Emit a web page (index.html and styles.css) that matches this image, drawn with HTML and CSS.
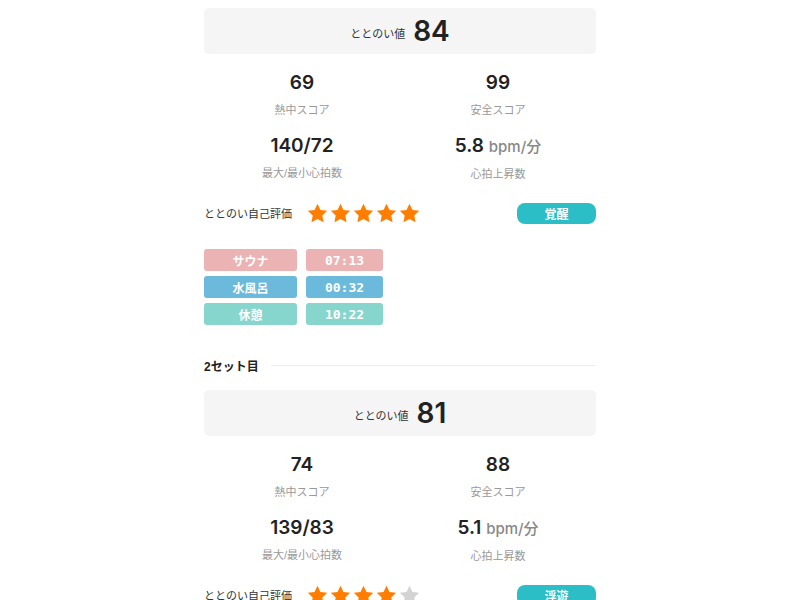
FILE: index.html
```html
<!DOCTYPE html>
<html lang="ja">
<head>
<meta charset="utf-8">
<link rel="stylesheet" href="styles.css">
</head>
<body>
<main class="page">
  <section class="set">
    <div class="score-box"><span class="score-label">ととのい値</span><span class="score-value">84</span></div>
    <div class="stats">
      <div class="stat"><div class="stat-num">69</div><div class="stat-label">熱中スコア</div></div>
      <div class="stat"><div class="stat-num">99</div><div class="stat-label">安全スコア</div></div>
      <div class="stat"><div class="stat-num">140/72</div><div class="stat-label">最大/最小心拍数</div></div>
      <div class="stat"><div class="stat-num">5.8 <span class="unit">bpm/分</span></div><div class="stat-label">心拍上昇数</div></div>
    </div>
    <div class="rating">
      <span class="rating-label">ととのい自己評価</span>
      <span class="stars">
        <svg class="star on" viewBox="0 0 24 24"><path d="M12 1.8l3.1 6.5 7 .9-5.1 4.9 1.3 7L12 17.7l-6.3 3.4 1.3-7-5.1-4.9 7-.9z"/></svg>
        <svg class="star on" viewBox="0 0 24 24"><path d="M12 1.8l3.1 6.5 7 .9-5.1 4.9 1.3 7L12 17.7l-6.3 3.4 1.3-7-5.1-4.9 7-.9z"/></svg>
        <svg class="star on" viewBox="0 0 24 24"><path d="M12 1.8l3.1 6.5 7 .9-5.1 4.9 1.3 7L12 17.7l-6.3 3.4 1.3-7-5.1-4.9 7-.9z"/></svg>
        <svg class="star on" viewBox="0 0 24 24"><path d="M12 1.8l3.1 6.5 7 .9-5.1 4.9 1.3 7L12 17.7l-6.3 3.4 1.3-7-5.1-4.9 7-.9z"/></svg>
        <svg class="star on" viewBox="0 0 24 24"><path d="M12 1.8l3.1 6.5 7 .9-5.1 4.9 1.3 7L12 17.7l-6.3 3.4 1.3-7-5.1-4.9 7-.9z"/></svg>
      </span>
      <span class="badge">覚醒</span>
    </div>
    <div class="chips">
      <span class="chip sauna">サウナ</span><span class="chip sauna mono">07:13</span>
      <span class="chip water">水風呂</span><span class="chip water mono">00:32</span>
      <span class="chip rest">休憩</span><span class="chip rest mono">10:22</span>
    </div>
  </section>

  <h2 class="set-heading"><span>2セット目</span></h2>

  <section class="set">
    <div class="score-box"><span class="score-label">ととのい値</span><span class="score-value">81</span></div>
    <div class="stats">
      <div class="stat"><div class="stat-num">74</div><div class="stat-label">熱中スコア</div></div>
      <div class="stat"><div class="stat-num">88</div><div class="stat-label">安全スコア</div></div>
      <div class="stat"><div class="stat-num">139/83</div><div class="stat-label">最大/最小心拍数</div></div>
      <div class="stat"><div class="stat-num">5.1 <span class="unit">bpm/分</span></div><div class="stat-label">心拍上昇数</div></div>
    </div>
    <div class="rating">
      <span class="rating-label">ととのい自己評価</span>
      <span class="stars">
        <svg class="star on" viewBox="0 0 24 24"><path d="M12 1.8l3.1 6.5 7 .9-5.1 4.9 1.3 7L12 17.7l-6.3 3.4 1.3-7-5.1-4.9 7-.9z"/></svg>
        <svg class="star on" viewBox="0 0 24 24"><path d="M12 1.8l3.1 6.5 7 .9-5.1 4.9 1.3 7L12 17.7l-6.3 3.4 1.3-7-5.1-4.9 7-.9z"/></svg>
        <svg class="star on" viewBox="0 0 24 24"><path d="M12 1.8l3.1 6.5 7 .9-5.1 4.9 1.3 7L12 17.7l-6.3 3.4 1.3-7-5.1-4.9 7-.9z"/></svg>
        <svg class="star on" viewBox="0 0 24 24"><path d="M12 1.8l3.1 6.5 7 .9-5.1 4.9 1.3 7L12 17.7l-6.3 3.4 1.3-7-5.1-4.9 7-.9z"/></svg>
        <svg class="star off" viewBox="0 0 24 24"><path d="M12 1.8l3.1 6.5 7 .9-5.1 4.9 1.3 7L12 17.7l-6.3 3.4 1.3-7-5.1-4.9 7-.9z"/></svg>
      </span>
      <span class="badge">浮遊</span>
    </div>
  </section>
</main>
</body>
</html>
```

FILE: styles.css
```css
html, body {
  margin: 0;
  padding: 0;
  background: #fff;
  overflow: hidden;
}
body {
  font-family: "Liberation Sans", "Noto Sans CJK JP", sans-serif;
  color: #222;
}
.page {
  width: 392px;
  margin: 0 auto;
  padding-top: 8px;
}
.score-box {
  height: 46px;
  background: #f5f5f5;
  border-radius: 5px;
  display: flex;
  align-items: center;
  justify-content: center;
  gap: 8px;
}
.score-label {
  font-size: 11px;
  color: #333;
  padding-top: 4px;
}
.score-value {
  font-family: Inter, "Liberation Sans", sans-serif;
  font-size: 28px;
  font-weight: 600;
  color: #222;
}
.stats {
  display: grid;
  grid-template-columns: 1fr 1fr;
  row-gap: 16px;
  padding-top: 17px;
}
.stat {
  display: flex;
  flex-direction: column;
  align-items: center;
}
.stat-num {
  font-family: Inter, "Liberation Sans", "Noto Sans CJK JP", sans-serif;
  font-size: 19px;
  font-weight: 600;
  line-height: 24px;
  color: #222;
}
.unit {
  font-size: 15px;
  font-weight: 500;
  color: #888;
}
.stat-label {
  margin-top: 7px;
  font-size: 11px;
  line-height: 16px;
  color: #999;
}
.rating {
  margin-top: 20px;
  height: 22px;
  display: flex;
  align-items: center;
}
.rating-label {
  font-size: 11px;
  color: #333;
  width: 102px;
}
.stars {
  display: flex;
  gap: 0;
}
.star {
  width: 23px;
  height: 23px;
  display: block;
}
.star.on { fill: #ff7d00; }
.star.off { fill: #d3d3d3; }
.badge {
  margin-left: auto;
  width: 79px;
  height: 21px;
  border-radius: 8px;
  background: #2bbec6;
  color: #fff;
  font-size: 12px;
  font-weight: 700;
  display: flex;
  align-items: center;
  justify-content: center;
}
.chips {
  margin-top: 25px;
  display: grid;
  grid-template-columns: 93px 77px;
  column-gap: 9px;
  row-gap: 5px;
}
.chip {
  height: 22px;
  border-radius: 3px;
  color: #fff;
  font-size: 12px;
  font-weight: 700;
  display: flex;
  align-items: center;
  justify-content: center;
}
.chip.mono {
  font-family: "DejaVu Sans Mono", monospace;
  font-weight: 700;
  font-size: 13px;
}
.sauna { background: #ebb3b4; }
.water { background: #6bbadb; }
.rest { background: #86d6cd; }
.set-heading {
  margin: 32px 0 17px;
  height: 16px;
  display: flex;
  align-items: center;
  gap: 12px;
  font-size: 12px;
  font-weight: 700;
  color: #222;
}
.set-heading::after {
  content: "";
  flex: 1;
  height: 1px;
  background: #eee;
}
```
